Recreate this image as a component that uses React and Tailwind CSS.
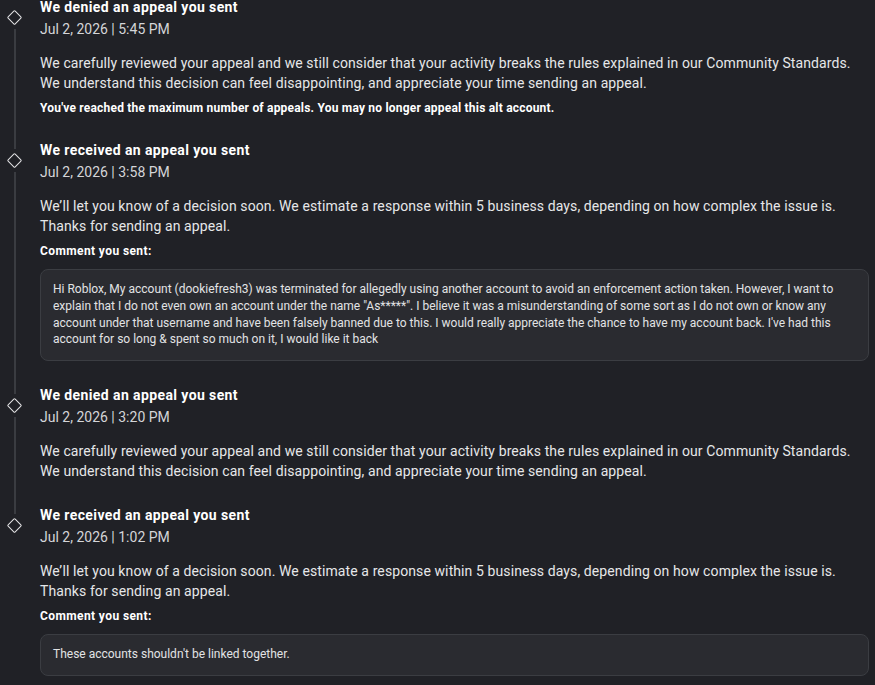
import React from "react";

const entries = [
  {
    title: "We denied an appeal you sent",
    date: "Jul 2, 2026 | 5:45 PM",
    body: [
      "We carefully reviewed your appeal and we still consider that your activity breaks the rules explained in our Community Standards.",
      "We understand this decision can feel disappointing, and appreciate your time sending an appeal.",
    ],
    note: "You've reached the maximum number of appeals. You may no longer appeal this alt account.",
  },
  {
    title: "We received an appeal you sent",
    date: "Jul 2, 2026 | 3:58 PM",
    body: [
      "We\u2019ll let you know of a decision soon. We estimate a response within 5 business days, depending on how complex the issue is.",
      "Thanks for sending an appeal.",
    ],
    comment:
      "Hi Roblox, My account (dookiefresh3) was terminated for allegedly using another account to avoid an enforcement action taken. However, I want to explain that I do not even own an account under the name \"As*****\". I believe it was a misunderstanding of some sort as I do not own or know any account under that username and have been falsely banned due to this. I would really appreciate the chance to have my account back. I've had this account for so long & spent so much on it, I would like it back",
  },
  {
    title: "We denied an appeal you sent",
    date: "Jul 2, 2026 | 3:20 PM",
    body: [
      "We carefully reviewed your appeal and we still consider that your activity breaks the rules explained in our Community Standards.",
      "We understand this decision can feel disappointing, and appreciate your time sending an appeal.",
    ],
  },
  {
    title: "We received an appeal you sent",
    date: "Jul 2, 2026 | 1:02 PM",
    body: [
      "We\u2019ll let you know of a decision soon. We estimate a response within 5 business days, depending on how complex the issue is.",
      "Thanks for sending an appeal.",
    ],
    comment: "These accounts shouldn't be linked together.",
  },
];

function Entry({ e, first, last }) {
  return (
    <div className="flex">
      <div className="w-[29px] shrink-0 flex flex-col items-center">
        <div className={`w-[2px] h-[9px] ${first ? "" : "bg-[#3a3c41]"}`} />
        <div className="h-[16px] w-[16px] mt-[3px] flex items-center justify-center">
          <div className="w-[11px] h-[11px] rotate-45 border-[1.7px] border-[#e4e4e6] rounded-[1.5px]" />
        </div>
        {!last && <div className="w-[2px] flex-1 mt-[4px] bg-[#3a3c41]" />}
      </div>
      <div className={`flex-1 ml-[11px] mr-[6px] ${last ? "pb-[11px]" : "pb-6"}`}>
        <div className="text-[14px] leading-[20px] font-bold tracking-[0.4px] text-white">{e.title}</div>
        <div className="mt-[2px] text-[14px] leading-[20px] text-[#d4d5d8]">{e.date}</div>
        <div className="mt-[14px] text-[14px] leading-[20px] tracking-[0.1px] text-[#e6e7e9]">
          {e.body.map((l, i) => (
            <div key={i}>{l}</div>
          ))}
        </div>
        {e.note && (
          <div className="mt-[7px] text-[12px] leading-[16px] font-bold tracking-[0.2px] text-white">{e.note}</div>
        )}
        {e.comment && (
          <>
            <div className="mt-[7px] text-[12px] leading-[16px] font-bold tracking-[0.4px] text-white">Comment you sent:</div>
            <div className="mt-[10px] rounded-[8px] border border-[#3b3d42] bg-[#2a2b30] px-3 pt-[11px] pb-[12px] text-[12px] leading-[16.8px] text-[#e2e3e5]">
              {e.comment}
            </div>
          </>
        )}
      </div>
    </div>
  );
}

export default function App() {
  return (
    <div
      className="w-[875px] h-[685px] overflow-hidden bg-[#202126]"
      style={{ fontFamily: "Roboto, 'Noto Sans', sans-serif" }}
    >
      <div className="-mt-[3px]">
        {entries.map((e, i) => (
          <Entry key={i} e={e} first={i === 0} last={i === entries.length - 1} />
        ))}
      </div>
    </div>
  );
}
